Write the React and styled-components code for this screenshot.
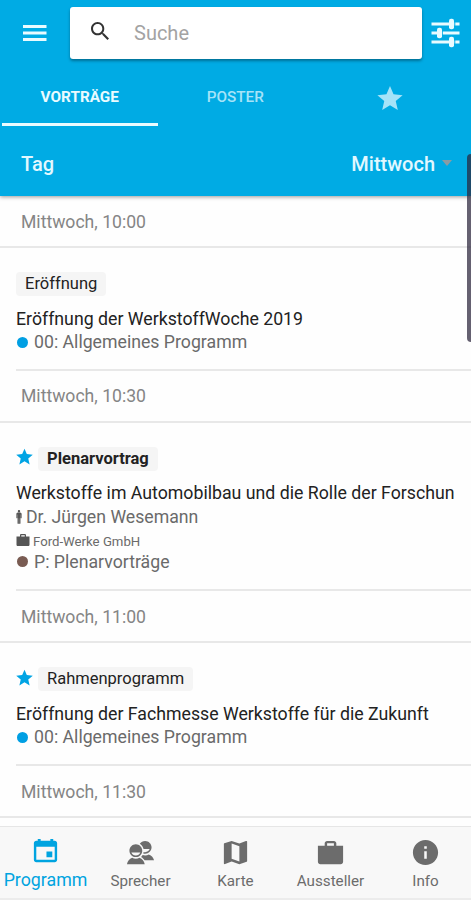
import React from 'react';
import styled, { createGlobalStyle } from 'styled-components';
import {
  IoMdSearch,
  IoMdStar,
  IoMdMan,
  IoMdBriefcase,
  IoMdCalendar,
  IoMdContacts,
  IoMdMap,
  IoMdInformationCircle,
} from 'react-icons/io';

const GlobalStyle = createGlobalStyle`
  * {
    box-sizing: border-box;
  }

  body {
    margin: 0;
    background: #fefefe;
    font-family: Roboto, "Liberation Sans", sans-serif;
  }
`;

const Screen = styled.div`
  position: relative;
  display: flex;
  flex-direction: column;
  width: 471px;
  height: 900px;
  overflow: hidden;
`;

const Header = styled.header`
  flex: none;
  height: 196px;
  background: #00abe4;
  color: #fff;
  box-shadow: 0 1px 4px rgba(0, 0, 0, 0.4);
  z-index: 1;
`;

const Toolbar = styled.div`
  display: flex;
  align-items: center;
  height: 66px;
  padding: 0 9px 0 22px;
`;

const IconButton = styled.button`
  display: flex;
  padding: 0;
  border: none;
  background: none;
  color: #e9fbff;
`;

const SearchBox = styled.label`
  display: flex;
  align-items: center;
  width: 352px;
  height: 52px;
  margin: 0 8px 0 22px;
  padding-left: 18px;
  border-radius: 3px;
  background: #fff;
  color: #333;
  font-size: 24px;
  box-shadow: 0 2px 3px rgba(0, 0, 0, 0.35);

  svg {
    margin-bottom: 4px;
  }
`;

const SearchText = styled.span`
  margin-left: 22px;
  color: #a3a3a3;
  font-size: 20px;
`;

const Tabs = styled.nav`
  display: flex;
  height: 60px;
  padding-left: 2px;
`;

const Tab = styled.div`
  display: flex;
  align-items: center;
  justify-content: center;
  width: 155.5px;
  height: 60px;
  padding-top: 5px;
  border-bottom: 3px solid ${({ $active }) => ($active ? '#e9fbff' : 'transparent')};
  color: ${({ $active }) => ($active ? '#e9fbff' : '#a6e3f8')};
  font-size: ${({ $size }) => $size || 15.3}px;
  font-weight: ${({ $active }) => ($active ? 700 : 500)};

  svg {
    margin: 2px 2px 0 0;
  }
`;

const DayRow = styled.div`
  display: flex;
  align-items: center;
  height: 70px;
  padding: 5px 18px 0 21px;
  color: #e2f8ff;
  font-size: 20px;
  font-weight: 500;
`;

const DayValue = styled.span`
  margin-left: auto;
`;

const Caret = styled.span`
  margin: 0 1px 2px 7px;
  border: 5px solid transparent;
  border-top: 6px solid #8a9ba3;
  border-bottom: 0;
`;

const List = styled.main`
  flex: none;
  height: 630px;
  overflow: hidden;
`;

const TimeHeader = styled.div`
  display: flex;
  align-items: center;
  height: 52px;
  padding: 1px 21px 0;
  border-bottom: 2px solid #e8e8e8;
  color: #858585;
  font-size: 17.6px;
`;

const Talk = styled.article`
  height: ${({ $height }) => $height}px;
  margin-left: 16px;
  padding-top: 23.5px;
  border-bottom: 2px solid #e8e8e8;
  white-space: nowrap;
`;

const TagLine = styled.div`
  display: flex;
  align-items: center;
  height: 25px;
  margin-bottom: 11px;
  color: #00a4e4;
  font-size: 21px;

  svg {
    margin: 0 2px 4px -2px;
  }
`;

const Tag = styled.span`
  height: 24px;
  margin-left: ${({ $starred }) => ($starred ? 1 : 0)}px;
  padding: 0 9px;
  border-radius: 4px;
  background: #f5f5f5;
  color: #222;
  font-size: 16.5px;
  font-weight: ${({ $bold }) => ($bold ? 700 : 400)};
  line-height: 24px;
`;

const Title = styled.div`
  color: #222;
  font-size: 17.73px;
  line-height: 23px;
`;

const Detail = styled.div`
  display: flex;
  align-items: center;
  height: ${({ $small }) => ($small ? 22 : 23)}px;
  padding-top: ${({ $small }) => ($small ? 4 : 0)}px;
  color: #6a6a6a;
  font-size: ${({ $small }) => ($small ? 13.2 : 17.7)}px;

  svg {
    flex: none;
    color: #555;
  }
`;

const ManIcon = styled(IoMdMan)`
  margin: 0 -1px 0 -5px;
  font-size: 16px;
`;

const CompanyIcon = styled(IoMdBriefcase)`
  margin: 0 2px 3px -1px;
  font-size: 16px;
`;

const Dot = styled.span`
  width: 11px;
  height: 11px;
  margin: 0 6px 0 1px;
  border-radius: 50%;
  background: ${({ $color }) => $color};
`;

const TabBar = styled.footer`
  display: flex;
  flex: none;
  height: 74px;
  border-top: 1px solid #e6e6e6;
  border-bottom: 2px solid #ececec;
  background: #f8f8f8;
`;

const TabItem = styled.div`
  display: flex;
  flex-direction: column;
  align-items: center;
  width: 95px;
  flex: none;
  margin-left: ${({ $active }) => ($active ? -2 : 0)}px;
  padding-top: ${({ $active }) => ($active ? 8 : 10)}px;
  color: ${({ $active }) => ($active ? '#00a4e0' : '#6c6c6c')};
  font-size: ${({ $active }) => ($active ? 17.8 : 15.2)}px;

  svg {
    font-size: 31px;
  }
`;

const TabLabel = styled.span`
  margin-top: ${({ $active }) => ($active ? 3 : 2)}px;
  line-height: 22px;
`;

const ScrollHandle = styled.div`
  position: absolute;
  top: 154px;
  right: -4px;
  width: 8px;
  height: 188px;
  border-radius: 4px;
  background: rgba(42, 36, 58, 0.72);
  z-index: 2;
`;

const MenuIcon = () => (
  <svg width="26" height="20" viewBox="0 0 26 20" fill="currentColor">
    <path d="M1 2h23.5v3H1zM1 8.5h23.5v3H1zM1 15h23.5v3H1z" />
  </svg>
);

const FilterIcon = () => (
  <svg width="30" height="30" viewBox="0 0 30 30" fill="currentColor">
    <path d="M1.5 4.5h28v3h-28zM1.5 13.5h28v3h-28zM1.5 22.5h28v3h-28z" />
    {/* gap next to each knob */}
    <path d="M24.3 4h1v4h-1zM11.8 13h1v4h-1zM24.3 22h1v4h-1z" fill="#00abe4" />
    <rect x="19" y="0.8" width="5" height="10.4" rx="2" />
    <rect x="7" y="9.8" width="5" height="10.4" rx="2" />
    <rect x="19" y="18.8" width="5" height="10.4" rx="2" />
  </svg>
);

const sessions = [
  {
    time: 'Mittwoch, 10:00',
    tag: 'Eröffnung',
    title: 'Eröffnung der WerkstoffWoche 2019',
    topic: '00: Allgemeines Programm',
    color: '#009fe3',
    height: 122.5,
  },
  {
    time: 'Mittwoch, 10:30',
    tag: 'Plenarvortrag',
    bold: true,
    starred: true,
    title: 'Werkstoffe im Automobilbau und die Rolle der Forschun',
    speaker: 'Dr. Jürgen Wesemann',
    company: 'Ford-Werke GmbH',
    topic: 'P: Plenarvorträge',
    color: '#795b52',
    height: 168.5,
  },
  {
    time: 'Mittwoch, 11:00',
    tag: 'Rahmenprogramm',
    starred: true,
    title: 'Eröffnung der Fachmesse Werkstoffe für die Zukunft',
    topic: '00: Allgemeines Programm',
    color: '#009fe3',
    height: 123,
  },
];

const Session = ({ session }) => (
  <>
    <TimeHeader>{session.time}</TimeHeader>
    <Talk $height={session.height}>
      <TagLine>
        {session.starred && <IoMdStar />}
        <Tag $bold={session.bold} $starred={session.starred}>{session.tag}</Tag>
      </TagLine>
      <Title>{session.title}</Title>
      {session.speaker && (
        <Detail>
          <ManIcon />
          {session.speaker}
        </Detail>
      )}
      {session.company && (
        <Detail $small>
          <CompanyIcon />
          {session.company}
        </Detail>
      )}
      <Detail>
        <Dot $color={session.color} />
        {session.topic}
      </Detail>
    </Talk>
  </>
);

const App = () => {
  return (
    <Screen>
      <GlobalStyle />
      <Header>
        <Toolbar>
          <IconButton><MenuIcon /></IconButton>
          <SearchBox>
            <IoMdSearch />
            <SearchText>Suche</SearchText>
          </SearchBox>
          <IconButton><FilterIcon /></IconButton>
        </Toolbar>
        <Tabs>
          <Tab $active>VORTRÄGE</Tab>
          <Tab>POSTER</Tab>
          <Tab $size={32}><IoMdStar /></Tab>
        </Tabs>
        <DayRow>
          <span>Tag</span>
          <DayValue>Mittwoch</DayValue>
          <Caret />
        </DayRow>
      </Header>
      <List>
        {sessions.map((session) => (
          <Session key={session.time} session={session} />
        ))}
        <TimeHeader>Mittwoch, 11:30</TimeHeader>
      </List>
      <TabBar>
        <TabItem $active><IoMdCalendar /><TabLabel $active>Programm</TabLabel></TabItem>
        <TabItem><IoMdContacts /><TabLabel>Sprecher</TabLabel></TabItem>
        <TabItem><IoMdMap /><TabLabel>Karte</TabLabel></TabItem>
        <TabItem><IoMdBriefcase /><TabLabel>Aussteller</TabLabel></TabItem>
        <TabItem><IoMdInformationCircle /><TabLabel>Info</TabLabel></TabItem>
      </TabBar>
      <ScrollHandle />
    </Screen>
  );
};

export default App;
